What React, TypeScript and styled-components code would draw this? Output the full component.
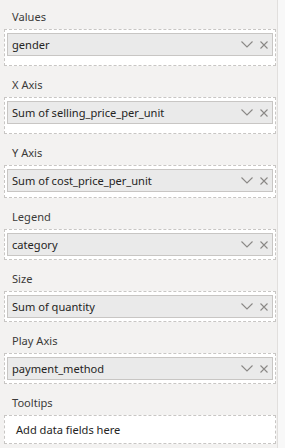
import styled, { createGlobalStyle } from "styled-components";

const GlobalStyle = createGlobalStyle`
  html, body {
    margin: 0;
    padding: 0;
    background: #f8f8f8;
  }
  body {
    font-family: "Noto Sans", "Open Sans", sans-serif;
  }
`

const Page = styled.div`
  display: flex;
  height: 448px;
  overflow: hidden;
`

const Panel = styled.div`
  box-sizing: border-box;
  width: 278px;
  height: 448px;
  padding: 0 1px 0 4px;
  background: #f3f2f1;
  border-right: 1px solid #e1dfdd;
  display: flex;
  flex-direction: column;
`

const Section = styled.div`
  display: flex;
  flex-direction: column;
  margin-bottom: 2px;
`

const Label = styled.div`
  height: 29px;
  padding: 7px 0 0 8px;
  box-sizing: border-box;
  font-size: 11.1px;
  line-height: 20px;
  color: #3b3a39;
`

const Well = styled.div<{ $bottom?: number }>`
  box-sizing: border-box;
  border: 1px dashed #c8c6c4;
  background: #ffffff;
  padding: 3px 2px ${(p) => p.$bottom ?? 3}px 2px;
`

const Field = styled.div`
  box-sizing: border-box;
  height: 23px;
  display: flex;
  align-items: center;
  padding: 0 4px 0 4px;
  background: #eaeaea;
  border: 1px solid #c8c6c4;
  font-size: 11.1px;
  color: #252423;
`

const FieldName = styled.span`
  flex: 1;
  white-space: nowrap;
`

const Icons = styled.div`
  display: flex;
  align-items: center;
  gap: 7px;
`

const Placeholder = styled.div`
  height: 21px;
  display: flex;
  align-items: center;
  padding-left: 9px;
  font-size: 11.1px;
  color: #252423;
`

const Chevron = () => (
  <svg width="12" height="7" viewBox="0 0 12 7">
    <path d="M0.5 0.5 L6 6 L11.5 0.5" fill="none" stroke="#8a8886" strokeWidth="1.1" />
  </svg>
)

const Close = () => (
  <svg width="8" height="8" viewBox="0 0 8 8">
    <path d="M0.5 0.5 L7.5 7.5 M7.5 0.5 L0.5 7.5" fill="none" stroke="#8a8886" strokeWidth="1.1" />
  </svg>
)

const wells = [
  { label: "Values", field: "gender", bottom: 9 },
  { label: "X Axis", field: "Sum of selling_price_per_unit", bottom: 9 },
  { label: "Y Axis", field: "Sum of cost_price_per_unit", bottom: 5 },
  { label: "Legend", field: "category" },
  { label: "Size", field: "Sum of quantity" },
  { label: "Play Axis", field: "payment_method" },
]

export default function App() {
  return (
    <Page>
      <GlobalStyle/>
      <Panel>
        {wells.map((w) => (
          <Section key={w.label}>
            <Label>{w.label}</Label>
            <Well $bottom={w.bottom}>
              <Field>
                <FieldName>{w.field}</FieldName>
                <Icons>
                  <Chevron/>
                  <Close/>
                </Icons>
              </Field>
            </Well>
          </Section>
        ))}
        <Section>
          <Label>Tooltips</Label>
          <Well>
            <Placeholder>Add data fields here</Placeholder>
          </Well>
        </Section>
      </Panel>
    </Page>
  )
}
